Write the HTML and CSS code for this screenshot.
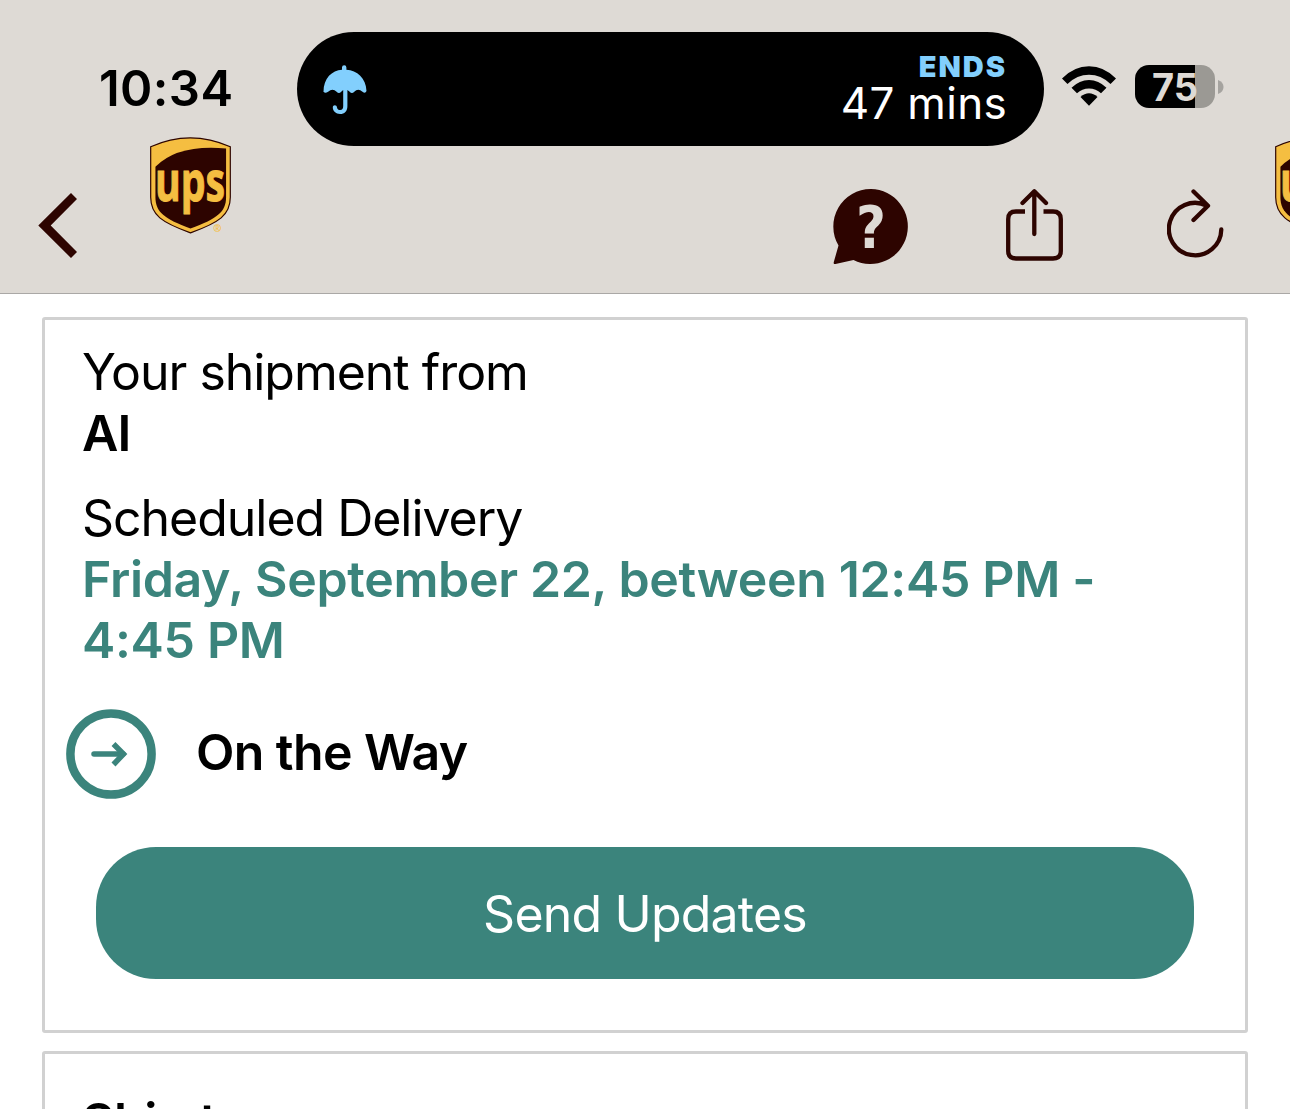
FILE: index.html
```html
<!DOCTYPE html>
<html lang="en">
<head>
    <meta charset="UTF-8">
    <meta name="viewport" content="width=device-width, initial-scale=1.0">
    <title>UPS Tracking</title>
    <link rel="stylesheet" href="styles.css">
</head>
<body>
    <svg class="defs" width="0" height="0">
        <symbol id="ups-logo" viewBox="0 0 82 98">
            <path d="M.7 9.700Q40.500-8.300 81.300 9.700V61C81.300 79 70 86.500 41 97C12 86.500.7 79 .7 61Z" fill="#f5be41" stroke="#2d0400" stroke-width="1.200"/>
            <path d="M5.500 30Q28 7 77 11.500V61C77 76 67.500 83 41 92.500C14.500 83 5.500 76 5.500 61Z" fill="#2d0400"/>
            <g fill="#f5be41" font-family="Open Sans, sans-serif" font-weight="700">
                <text x="5" y="65" font-size="57" textLength="71" lengthAdjust="spacingAndGlyphs" stroke="#f5be41" stroke-width="1">ups</text>
                <text x="64" y="96.500" font-size="10">®</text>
            </g>
        </symbol>
    </svg>
    <header class="header">
        <div class="status-bar">
            <div class="time">10:34</div>
            <div class="island">
                <svg width="46" height="52" viewBox="0 0 46 52">
                    <path d="M1.500 28C1.500 14 10 6.500 20 5.800V3.500a2.200 2.200 0 0 1 4.400 0V5.800C35 6.500 44 14 44.500 27q-1.200 3-4 .8q-4.500-4-8.200 0q-2.500 2.500-4.600 0l-2.300-1.800V42c0 5.500-3 8-7.300 8s-7.300-3-7.300-6.500c0-3 4-3 4.200 0c.2 1.500 1.200 2.600 3.200 2.600c2 0 3-1.300 3-4.100V26l-2 1.800q-2.200 2.500-4.600 0q-4-4-8.500 0q-3 2-4 .2Z" fill="#82cffd"/>
                </svg>
                <div class="timer">
                    <div class="ends">ENDS</div>
                    <div class="mins">47 mins</div>
                </div>
            </div>
            <svg class="wifi" width="54" height="40" viewBox="0 0 54 40">
                <path d="M0 12.500Q12 .3 27 .3T54 12.500L48.500 18Q39 8.800 27 8.800T5.500 18Z"/>
                <path d="M9.500 21.800Q17.500 14 27 14T44.500 21.800L39 27.300Q34 22.500 27 22.500T15 27.300Z"/>
                <path d="M18.500 31Q22.500 27.300 27 27.300T35.500 31L27 39.800Z"/>
            </svg>
            <div class="battery">
                <div class="charge">75</div>
                <svg width="6" height="14" viewBox="0 0 6 14"><path d="M0 0Q5.500 2 5.500 7T0 14Z" fill="#a5a39f"/></svg>
            </div>
        </div>
        <div class="nav">
            <svg width="40" height="66" viewBox="0 0 40 66">
                <path d="M33 0L39 6L12.700 32.500L39 59L33 65L.3 32.500Z" fill="#2d0400"/>
            </svg>
            <div class="actions">
                <svg width="76" height="76" viewBox="0 0 76 76">
                    <path d="M38 0a37.500 37.500 0 1 1-17.500 71L2.500 75Q.2 75.500.8 73L5.500 56.500A37.500 37.500 0 0 1 38 0Z" fill="#2d0400"/>
                    <text x="23" y="59" textLength="30" lengthAdjust="spacingAndGlyphs" class="question">?</text>
                </svg>
                <svg width="58" height="74" viewBox="0 0 58 74" class="line-icon">
                    <path d="M19 22.500H10Q2.200 22.500 2.200 30.200V62Q2.200 69.500 10 69.500H47Q54.800 69.500 54.800 62V30.200Q54.800 22.500 47 22.500H37.500" stroke-linecap="butt"/>
                    <path d="M28.300 45V2.500M16.500 14L28.300 2.300L40 14"/>
                </svg>
                <svg width="58" height="72" viewBox="0 0 58 72" class="line-icon">
                    <path d="M54.300 40.500A26.200 26.200 0 1 1 39.500 16.500M26.500 2.500L41 16.700L26.500 31"/>
                </svg>
            </div>
        </div>
        <svg class="logo logo-left"><use href="#ups-logo"/></svg>
        <svg class="logo logo-right"><use href="#ups-logo"/></svg>
    </header>
    <main class="content">
        <section class="card">
            <p class="shipment">Your shipment from<br><b>AI</b></p>
            <p class="delivery"><span class="label">Scheduled Delivery</span><br><b>Friday, September 22, between 12:45 PM -<br>4:45 PM</b></p>
            <div class="status">
                <svg width="90" height="90" viewBox="0 0 90 90" fill="none" stroke="#3b847c">
                    <circle cx="45" cy="45" r="40.600" stroke-width="8.500"/>
                    <path d="M28 45H57" stroke-width="5.500" stroke-linecap="round"/>
                    <path d="M47.500 35L57.500 45L47.500 55.500" stroke-width="5.500"/>
                </svg>
                <b>On the Way</b>
            </div>
            <button class="send">Send Updates</button>
        </section>
        <section class="card">
            <h2>Ship to</h2>
        </section>
    </main>
</body>
</html>
```
FILE: styles.css
```css
* { box-sizing: border-box; }
body {
    margin: 0;
    height: 1109px;
    overflow: hidden;
    background: #fff;
    color: #000;
    font-family: Inter, sans-serif;
    font-size: 50px;
    line-height: 61px;
}
svg { display: block; flex: none; }
.defs { position: absolute; }
b { font-weight: 600; letter-spacing: -0.33px; }
p { margin: 0; }

.header {
    position: relative;
    height: 294px;
    background: #dedad5;
    border-bottom: 1px solid #aaa8a6;
    overflow: hidden;
}
.status-bar {
    display: flex;
    height: 146px;
    padding: 32px 0 0 99px;
}
.time {
    width: 198px;
    padding-top: 26px;
    font-weight: 600;
    font-size: 49px;
    letter-spacing: 0.4px;
    white-space: nowrap;
}
.island {
    display: flex;
    justify-content: space-between;
    width: 747px;
    height: 114px;
    padding: 32px 37px 0 25px;
    background: #000;
    border-radius: 60px;
}
.timer { margin-top: -12px; text-align: right; white-space: nowrap; }
.ends {
    color: #82cffd;
    font-size: 29px;
    font-weight: 900;
    line-height: 30px;
    letter-spacing: 2px;
}
.mins { color: #fff; font-size: 44px; line-height: 43px; letter-spacing: 0.3px; }
.wifi { margin: 34px 19px 0 18px; }
.battery { display: flex; align-items: center; gap: 3px; height: 43px; margin-top: 33px; }
.charge {
    width: 80px;
    height: 43px;
    padding-left: 17px;
    border-radius: 14px;
    background: linear-gradient(90deg, #000 60px, #9b9994 60px);
    color: #dedad5;
    font-size: 38px;
    font-weight: 700;
    line-height: 44px;
}

.nav {
    display: flex;
    justify-content: space-between;
    padding: 43px 65px 0 38px;
}
.nav > svg { margin-top: 4px; }
.actions { display: flex; gap: 97px; }
.actions svg:last-child { margin-left: 6px; }
.question { fill: #dedad5; font-family: "DejaVu Sans", sans-serif; font-size: 58px; font-weight: 700; }
.line-icon { fill: none; stroke: #2d0400; stroke-width: 4.3; stroke-linecap: round; stroke-linejoin: round; }
.logo { position: absolute; width: 81px; height: 97px; }
.logo-left { left: 150px; top: 137px; }
.logo-right { left: 1275px; top: 137px; }

.content { padding: 23px 42px; }
.card {
    height: 716px;
    margin-bottom: 18px;
    padding: 22px 51px 0 37px;
    border: 3px solid #d1d1d1;
    border-radius: 3px;
}
.shipment, .label { letter-spacing: -1.03px; }
.shipment b { letter-spacing: -1px; }
.delivery { margin-top: 24px; color: #3b847c; white-space: nowrap; }
.label { color: #000; }
.status { display: flex; align-items: center; gap: 40px; margin: 38px 0 48px -16px; }
.status b { margin-top: -4px; letter-spacing: -0.6px; }
.send {
    display: block;
    width: 1098px;
    height: 132px;
    margin-left: 14px;
    padding: 2px 0 0;
    border: 0;
    border-radius: 60px;
    background: #3b847c;
    color: #fff;
    font: inherit;
    letter-spacing: -0.8px;
}
h2 { margin: 15px 0 0; font-size: 50px; font-weight: 600; letter-spacing: -0.5px; }
```
